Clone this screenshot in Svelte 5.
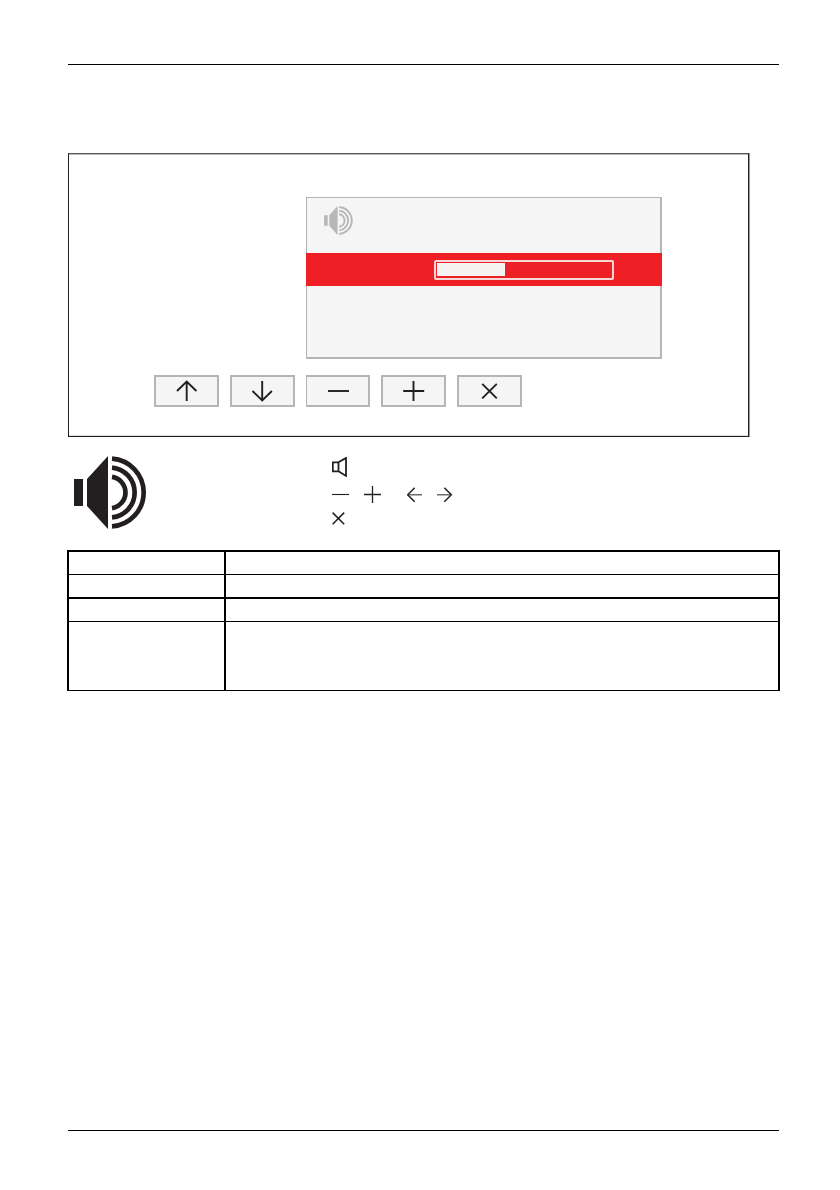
<script>
  const keys = [
    { name: 'up', d: 'M32.7 26V7M23 16l9.7-9.5L42.4 16' },
    { name: 'down', d: 'M32.2 6v19M22.5 16l9.7 9.5 9.7-9.5' },
    { name: 'minus', d: 'M22 16h21' },
    { name: 'plus', d: 'M22.2 16h21M32.5 6v20' },
    { name: 'close', d: 'M25.2 8.8l14.6 14.6M39.8 8.8L25.2 23.4' }
  ];

  const rows = ['short', 'short strong', 'short', 'tall'];
  let volume = 39;
</script>

{#snippet speaker()}
  <svg class="speaker" viewBox="0 0 72.5 73" aria-hidden="true">
    <path class="solid" d="M0 23h9v27H0zM13 23L34 0v73L13 50z" />
    <path class="wave" d="M38 2.58A34 34 0 0 1 38 70.42" />
    <path class="wave" d="M38 11.61A25 25 0 0 1 38 61.39" />
    <path class="wave" d="M38 20.87A15.8 15.8 0 0 1 38 52.13" />
  </svg>
{/snippet}

<main class="page">
  <hr />

  <section class="figure">
    <div class="screen">
      <div class="screen__head">{@render speaker()}</div>
      <div class="screen__active">
        <div class="meter">
          <div class="meter__fill" style="width: {volume}%"></div>
        </div>
      </div>
    </div>

    <div class="keys">
      {#each keys as key}
        <button type="button" class="key key--{key.name}" aria-label={key.name}>
          <svg viewBox="0 0 65 32"><path d={key.d} /></svg>
        </button>
      {/each}
    </div>
  </section>

  <section class="legend">
    {@render speaker()}
    <div class="legend__icons">
      <svg width="16" height="20" viewBox="0 0 16 20">
        <path class="heavy" d="M.8 5.3h5.7v9H.8zM6.5 5.3L14 .9v18l-7.5-4.6" />
      </svg>
      <div class="legend__row">
        <svg width="17" height="17" viewBox="0 0 17 17"><path d="M0 8.5h17" /></svg>
        <svg class="plus" width="17" height="17" viewBox="0 0 17 17"><path class="medium" d="M0 8.5h17M8.5 0v17" /></svg>
        <svg class="left" width="16" height="17" viewBox="0 0 16 17">
          <path class="shaft" d="M1 8.8h14" /><path class="bold" d="M7.7 1.8l-7 7 7 7" />
        </svg>
        <svg class="right" width="16" height="17" viewBox="0 0 16 17">
          <path class="shaft" d="M0 8.8h14" /><path class="bold" d="M7.3 1.8l7 7-7 7" />
        </svg>
      </div>
      <svg class="cross" width="13" height="13" viewBox="0 0 13 13"><path class="bold" d="M.6.6l11.6 11.6M12.2.6L.6 12.2" /></svg>
    </div>
  </section>

  <div class="table">
    {#each rows as row}
      <div class="row {row}">
        <div class="cell"></div>
        <div class="cell"></div>
      </div>
    {/each}
  </div>

  <hr class="foot" />
</main>

<style>
  :global(body) {
    background: #fff;
    font-family: "Liberation Sans", Arial, sans-serif;
  }

  .page {
    box-sizing: border-box;
    display: flex;
    flex-direction: column;
    height: 1190px;
    padding: 64px 61px 59px 67px;
  }

  hr {
    flex: none;
    width: 711px;
    height: 1px;
    margin: 0 0 0 1px;
    border: 0;
    background: #000;
  }

  .foot {
    margin-top: auto;
  }

  svg {
    display: block;
    flex: none;
  }

  .figure {
    box-sizing: border-box;
    width: 681px;
    height: 284px;
    margin: 88px 0 0 1px;
    padding: 43px 0 0 85px;
    border: 1px solid #231f20;
    border-top-color: #555;
    box-shadow: 1px 0 #999, inset 0 -1px #ddd, inset 0 1px #bbb;
  }

  .screen {
    box-sizing: border-box;
    width: 356px;
    height: 162px;
    margin-left: 152px;
    border: solid #b5b5b5;
    border-width: 1px 2px 2px 1px;
    background: #f5f5f5;
  }

  .screen__head {
    height: 47px;
    padding: 8px 0 0 17px;
    color: #b7b7b7;
  }

  .screen__head .speaker {
    width: 29px;
    height: 29px;
  }

  .screen__active {
    display: flex;
    align-items: center;
    box-sizing: border-box;
    height: 33px;
    margin: 0 -2px 0 -1px;
    padding-left: 127.5px;
    background: #ee2025;
  }

  .meter {
    box-sizing: border-box;
    width: 180px;
    height: 20px;
    padding: 1px;
    border: 2px solid #f8d8d6;
    border-radius: 2px;
  }

  .meter__fill {
    height: 13px;
    margin: .5px 0 0 .5px;
    background: #f5f4f2;
  }

  .keys {
    display: flex;
    gap: 11px;
    margin-top: 16px;
  }

  .key {
    position: relative;
    box-sizing: border-box;
    width: 65px;
    height: 32px;
    padding: 0;
    border: 2px solid #b5b5b5;
    background: #f5f5f5;
  }

  .key--minus {
    width: 64px;
    border-left-width: 1px;
  }

  .key svg {
    width: 65px;
    height: 32px;
    margin: -2px;
  }

  .key--minus svg {
    margin-left: -1px;
  }

  path {
    fill: none;
    stroke: #231f20;
    stroke-width: 1.1;
  }

  .key path {
    stroke-width: 1.9;
  }

  .medium {
    stroke-width: 1.3;
  }

  .bold {
    stroke-width: 1.5;
  }

  .heavy {
    stroke-width: 1.8;
  }

  .shaft {
    stroke: #555;
    stroke-width: 1.3;
  }

  .speaker .solid {
    fill: currentColor;
    stroke: none;
  }

  .speaker .wave {
    stroke: currentColor;
    stroke-width: 4.7;
  }

  .legend {
    display: flex;
    height: 94px;
    margin-top: 19px;
    padding-left: 7px;
    color: #231f20;
  }

  .legend .speaker {
    width: 72.5px;
    height: 73px;
  }

  .legend__icons {
    margin: 1px 0 0 185.5px;
  }

  .legend__row {
    display: flex;
    margin-top: 9px;
  }

  .plus {
    margin-left: 15px;
  }

  .left {
    margin-left: 26px;
  }

  .right {
    margin-left: 14px;
  }

  .cross {
    margin-top: 9px;
  }

  .table {
    border: solid #000;
    border-width: 2px 2px 0;
    width: 709px;
  }

  .row {
    display: grid;
    grid-template-columns: 155px 1fr;
    height: 22px;
    border-bottom: 1px solid #000;
  }

  .row.strong {
    border-bottom-width: 2px;
  }

  .row.tall {
    height: 68px;
  }

  .cell + .cell {
    border-left: 2px solid #000;
  }
</style>
